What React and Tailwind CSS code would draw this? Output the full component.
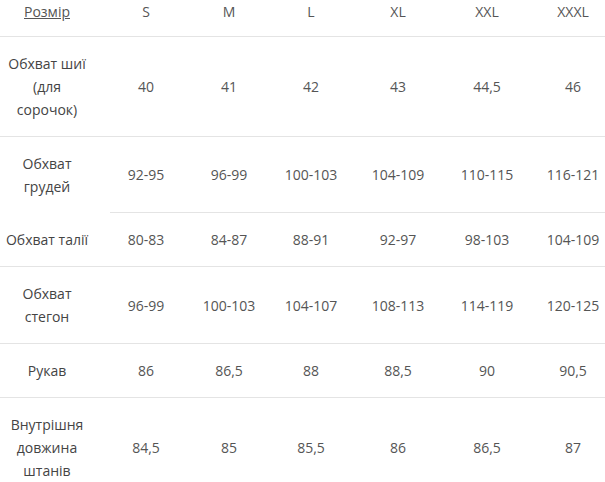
import React from 'react';

const sizes = ['S', 'M', 'L', 'XL', 'XXL', 'XXXL'];

// top: the rule drawn above the row
const rows = [
  { label: ['Обхват шиї', '(для', 'сорочок)'], values: ['40', '41', '42', '43', '44,5', '46'], h: 'h-[99px]', top: 'full' },
  { label: ['Обхват', 'грудей'], values: ['92-95', '96-99', '100-103', '104-109', '110-115', '116-121'], h: 'h-[75px]', top: 'full' },
  { label: ['Обхват талії'], values: ['80-83', '84-87', '88-91', '92-97', '98-103', '104-109'], h: 'h-[53px]', top: 'short' },
  { label: ['Обхват', 'стегон'], values: ['96-99', '100-103', '104-107', '108-113', '114-119', '120-125'], h: 'h-[76px]', top: 'full' },
  { label: ['Рукав'], values: ['86', '86,5', '88', '88,5', '90', '90,5'], h: 'h-[53px]', top: 'full' },
  { label: ['Внутрішня', 'довжина', 'штанів'], values: ['84,5', '85', '85,5', '86', '86,5', '87'], h: 'h-[98px]', top: 'full' },
];

const cols = 'grid grid-cols-[100px_92px_74px_90px_84px_94px_78px]';

function App() {
  return (
    <div className="w-[605px] h-[482px] overflow-hidden bg-white text-[14px] text-[#555]" style={{ fontFamily: '"Open Sans", "Noto Sans", sans-serif' }}>
      <div className={`${cols} h-[36px] items-start pt-[1px] leading-[22px]`}>
        <div className="text-center pr-[6px]">
          <span className="underline">Розмір</span>
        </div>
        {sizes.map((s) => (
          <div key={s} className="text-center">{s}</div>
        ))}
      </div>
      {rows.map((r, i) => (
        <div key={i}>
          <div className={`h-px bg-[#e4e4e4] ${r.top === 'short' ? 'ml-[110px]' : ''}`} />
          <div className={`${cols} ${r.h} items-center leading-[23px]`}>
            <div className="text-center pr-[6px] text-[#444]">
              {r.label.map((l) => (
                <div key={l}>{l}</div>
              ))}
            </div>
            {r.values.map((v, j) => (
              <div key={j} className="text-center">{v}</div>
            ))}
          </div>
        </div>
      ))}
    </div>
  );
}

export default App;
